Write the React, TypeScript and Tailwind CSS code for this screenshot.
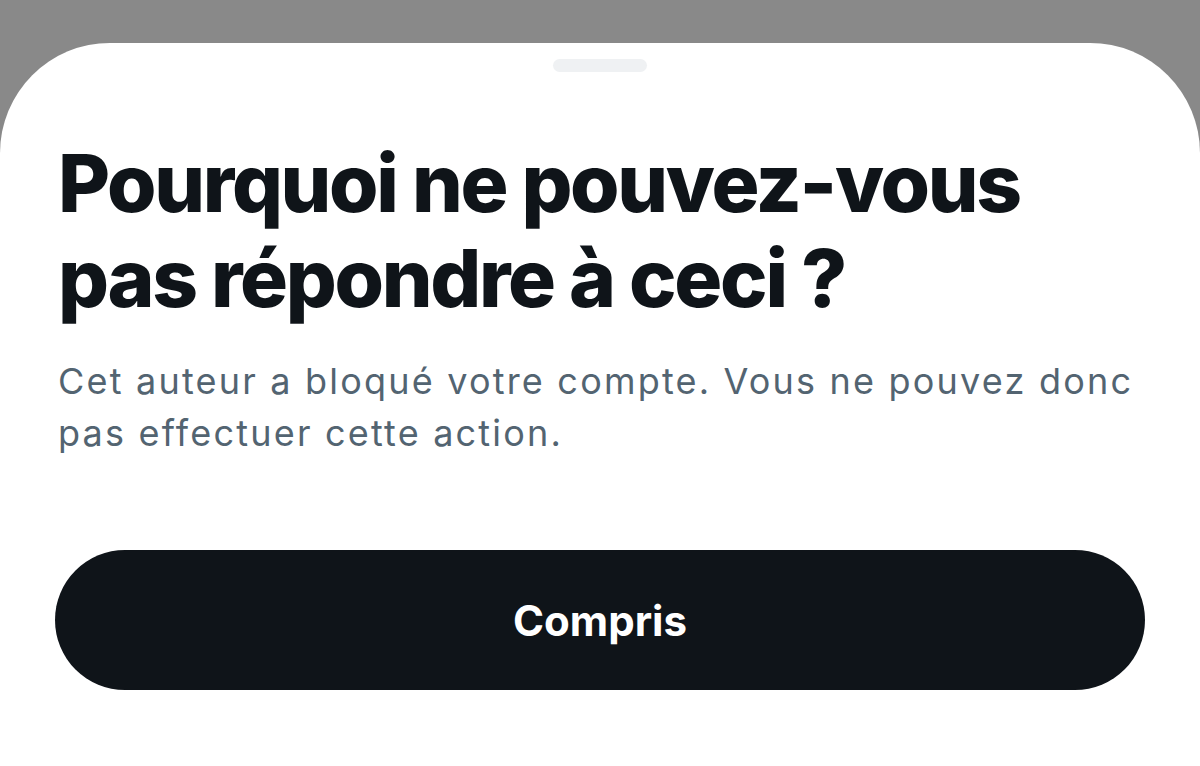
export default function App() {
  return (
    <main
      className="h-[766px] w-[1200px] bg-[#898989] pt-[43px] flex flex-col overflow-hidden"
      style={{ fontFamily: "Inter, 'Noto Sans', sans-serif" }}
    >
      {/* bottom sheet */}
      <section className="flex-1 bg-white rounded-t-[110px] flex flex-col px-[58px]">
        <div className="self-center mt-[16px] h-[13px] w-[94px] rounded-full bg-[#eff1f3]" />

        <h1 className="mt-[63px] text-[80px] leading-[95px] font-extrabold tracking-[-2.3px] text-[#0f1419]">
          Pourquoi ne pouvez-vous
          <br />
          pas répondre à ceci ?
        </h1>

        <p className="mt-[30px] text-[36px] leading-[52px] tracking-[2.2px] text-[#536471]">
          Cet auteur a bloqué votre compte. Vous ne pouvez donc
          <br />
          pas effectuer cette action.
        </p>

        <button className="mt-[91px] -mx-[3px] h-[140px] rounded-full bg-[#0f1419] text-white text-[42px] font-bold">
          Compris
        </button>
      </section>
    </main>
  );
}
